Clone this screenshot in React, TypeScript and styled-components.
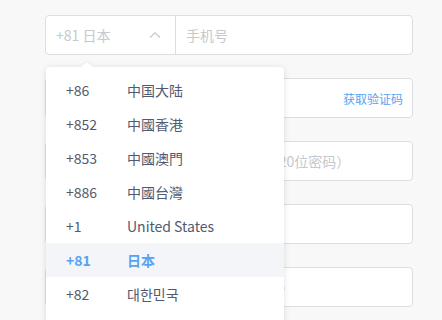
import React from "react";
import styled, { createGlobalStyle } from "styled-components";

const Global = createGlobalStyle`
  html, body { margin: 0; padding: 0; overflow: hidden; background: #f8f8f9; }
  body { font-family: "Noto Sans CJK SC", "Noto Sans", sans-serif; }
  * { box-sizing: border-box; }
`;

const Form = styled.div`
  width: 442px;
  height: 320px;
  padding: 15px 29px 0 45px;
  display: flex;
  flex-direction: column;
  gap: 23px;
`;

const Field = styled.div`
  position: relative;
  height: 40px;
  display: flex;
  align-items: center;
  background: #fff;
  border: 1px solid #dcdee2;
  border-radius: 4px;
  font-size: 14px;
`;

const Select = styled.div`
  position: relative;
  width: 130px;
  height: 100%;
  display: flex;
  align-items: center;
  justify-content: space-between;
  padding: 0 14px 0 10px;
  border-right: 1px solid #dcdee2;
  color: #c5c8ce;
`;

const Placeholder = styled.span`
  flex: 1;
  padding: 0 10px;
  color: #c5c8ce;
  white-space: nowrap;
  overflow: hidden;
`;

const Link = styled.span`
  color: #57a3f3;
  font-size: 12px;
  padding-right: 9px;
  white-space: nowrap;
`;

const Menu = styled.div`
  position: absolute;
  top: 51px;
  left: 0;
  width: 238px;
  background: #fff;
  border-radius: 4px;
  box-shadow: 0 1px 6px rgba(0, 0, 0, 0.12);
  padding: 6px 0;
  z-index: 10;
  &::before {
    content: "";
    position: absolute;
    top: -5px;
    left: 35px;
    width: 0;
    height: 0;
    border-left: 6px solid transparent;
    border-right: 6px solid transparent;
    border-bottom: 5px solid #fff;
    filter: drop-shadow(0 -1px 1px rgba(0, 0, 0, 0.06));
  }
`;

const Item = styled.div<{ $active?: boolean }>`
  height: 34px;
  display: flex;
  align-items: center;
  padding-left: 20px;
  font-size: 14px;
  color: ${(p) => (p.$active ? "#57a3f3" : "#515a6e")};
  font-weight: ${(p) => (p.$active ? 700 : 400)};
  background: ${(p) => (p.$active ? "#f3f5f9" : "transparent")};
`;

const Code = styled.span`
  width: 61px;
`;

const Chevron = () => (
  <svg width="12" height="8" viewBox="0 0 12 8" fill="none">
    <path d="M1 6.5 L6 1.8 L11 6.5" stroke="#c5c8ce" strokeWidth="1.3" />
  </svg>
);

const countries: [string, string][] = [
  ["+86", "中国大陆"],
  ["+852", "中國香港"],
  ["+853", "中國澳門"],
  ["+886", "中國台灣"],
  ["+1", "United States"],
  ["+81", "日本"],
  ["+82", "대한민국"],
  ["+65", "Singapore"],
];

export default function App() {
  return (
    <>
      <Global />
      <Form>
        <Field>
          <Select>
            <span>+81 日本</span>
            <Chevron />
            <Menu>
              {countries.map(([c, n]) => (
                <Item key={c} $active={c === "+81"}>
                  <Code>{c}</Code>
                  <span>{n}</span>
                </Item>
              ))}
            </Menu>
          </Select>
          <Placeholder>手机号</Placeholder>
        </Field>
        <Field>
          <Placeholder>请输入验证码</Placeholder>
          <Link>获取验证码</Link>
        </Field>
        <Field>
          <Placeholder>请设置密码，需包含字母和数字（6-20位密码）</Placeholder>
        </Field>
        <Field>
          <Placeholder>请再次输入密码</Placeholder>
        </Field>
        <Field>
          <Placeholder>邀请码（选填，没有邀请码可不填写）</Placeholder>
        </Field>
      </Form>
    </>
  );
}
